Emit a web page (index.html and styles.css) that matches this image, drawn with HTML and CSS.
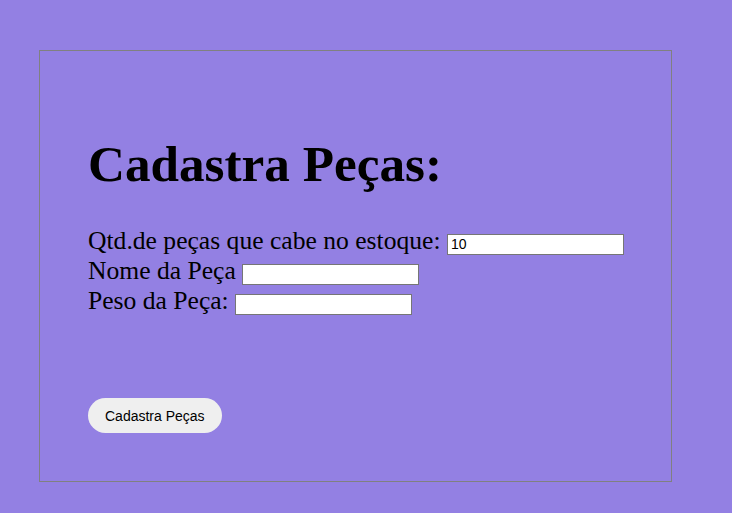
FILE: index.html
```html
<!DOCTYPE html>
<html lang="pt">
<head>
<meta charset="utf-8">
<title>Cadastra Peças</title>
<link rel="stylesheet" href="styles.css">
</head>
<body>
<div class="box">
  <h1 class="title">Cadastra Peças:</h1>
  <div class="fields">
    <label class="row">Qtd.de peças que cabe no estoque: <input class="field" type="text" value="10"></label>
    <label class="row">Nome da Peça <input class="field" type="text"></label>
    <label class="row">Peso da Peça: <input class="field" type="text"></label>
  </div>
  <button class="btn" type="button">Cadastra Peças</button>
</div>
</body>
</html>
```
FILE: styles.css
```css
html, body {
  margin: 0;
  padding: 0;
  background: #9380e3;
  height: 100%;
}
body {
  font-family: "Liberation Serif", "Times New Roman", serif;
  padding-top: 50px;
  box-sizing: border-box;
}
.box {
  margin-left: 39px;
  width: 633px;
  height: 432px;
  box-sizing: border-box;
  border: 1px solid #808080;
  padding: 84px 0 0 48px;
}
.title {
  margin: 0;
  font-size: 51.2px;
  font-weight: bold;
  line-height: 57px;
  color: #000;
}
.fields {
  margin-top: 34px;
  font-size: 25.6px;
  line-height: 30px;
  white-space: nowrap;
}
.row {
  display: block;
}
.field {
  width: 177px;
  height: 21px;
  box-sizing: border-box;
  border: 1px solid #767676;
  padding: 1px 3px;
  font-family: "Liberation Sans", Arial, sans-serif;
  font-size: 14px;
  background: #fff;
  color: #000;
  vertical-align: baseline;
  margin: 0;
}
.btn {
  display: block;
  margin-top: 82px;
  height: 35px;
  padding: 0 17px;
  border: none;
  border-radius: 18px;
  background: #efefef;
  font-family: "Liberation Sans", Arial, sans-serif;
  font-size: 14px;
  color: #000;
}
```
